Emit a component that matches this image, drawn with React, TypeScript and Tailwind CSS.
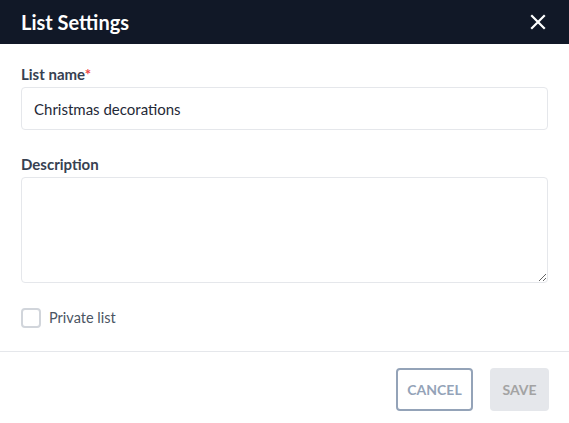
export default function App() {
  return (
    <div className="w-[569px] h-[423px] bg-white flex flex-col font-['Lato','Noto_Sans',sans-serif]">
      {/* Header */}
      <div className="h-[44px] bg-[#111827] flex items-center justify-between pl-[21px] pr-[23px]">
        <h2 className="text-[20px] font-bold text-white leading-none">List Settings</h2>
        <button className="text-white">
          <svg width="16" height="16" viewBox="0 0 16 16" fill="none" stroke="currentColor" strokeWidth="2.2" strokeLinecap="square">
            <path d="M2 2L14 14M14 2L2 14" />
          </svg>
        </button>
      </div>

      {/* Body */}
      <div className="flex flex-col px-[21px] pt-[21px] pb-[22px]">
        <label className="text-[15px] font-bold text-[#374151] leading-[19px]">
          List name<span className="text-[#ef4444]">*</span>
        </label>
        <input
          className="mt-[3px] h-[43px] w-full rounded-[4px] border border-[#e5e7eb] px-[12px] text-[15px] text-[#1f2937] outline-none"
          defaultValue="Christmas decorations"
        />

        <label className="mt-[25px] text-[15px] font-bold text-[#374151] leading-[19px]">Description</label>
        <textarea className="mt-[3px] h-[106px] w-full rounded-[4px] border border-[#e5e7eb] px-[12px] py-[10px] text-[15px] outline-none" />

        <label className="mt-[24px] flex items-center gap-[8px]">
          <span className="w-[20px] h-[20px] rounded-[4px] border-2 border-[#d1d5db] bg-white" />
          <span className="text-[14.5px] text-[#4b5563]">Private list</span>
        </label>
      </div>

      {/* Footer */}
      <div className="border-t border-[#e5e7eb] flex justify-end items-center gap-[17px] px-[20px] pt-[16px]">
        <button className="h-[43px] w-[77px] rounded-[4px] border-2 border-[#94a3b8] text-[14px] font-bold text-[#94a3b8]">
          CANCEL
        </button>
        <button className="h-[43px] w-[59px] rounded-[4px] bg-[#e5e7eb] text-[14px] font-bold text-[#a3a3a3]">
          SAVE
        </button>
      </div>
    </div>
  );
}
